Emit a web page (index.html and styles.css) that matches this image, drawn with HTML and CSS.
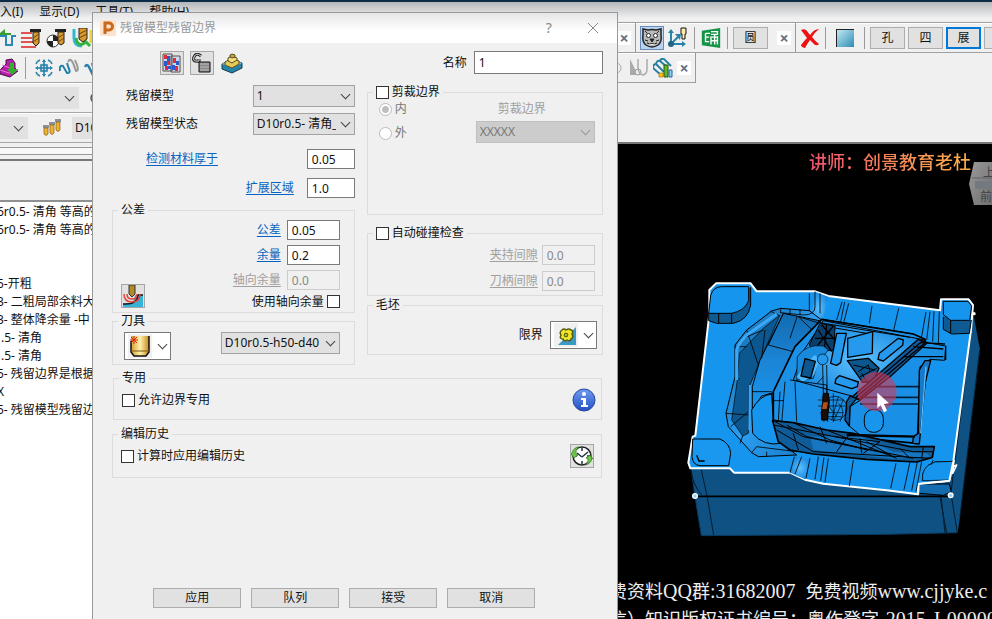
FILE: index.html
```html
<!DOCTYPE html>
<html lang="zh-CN">
<head>
<meta charset="utf-8">
<title>残留模型残留边界</title>
<link rel="stylesheet" href="styles.css">
</head>
<body>
<div class="app">
  <nav class="menubar">
    <a href="#">入(I)</a><a href="#">显示(D)</a><a href="#">工具(T)</a><a href="#">帮助(H)</a>
  </nav>
  <div class="workspace">
    <div class="dock">
      <div class="bar icons-a">
        <svg width="16" height="20" viewBox="0 0 16 20"><path d="M0 6h11" stroke="#3a9c2c" stroke-width="2"/><path d="M0 5l5-4v8z" fill="#3a9c2c"/><path d="M0 8h6v9h6V8h4" fill="none" stroke="#2b87b5" stroke-width="2"/></svg>
        <svg width="20" height="20" viewBox="0 0 20 20"><path d="M0 5h11M0 10h11M0 14h14M0 19h15" stroke="#d8201c" stroke-width="1.6"/><path d="M9 1h11v3H9z" fill="#222"/><path d="M12 4h6v11l-3 3-3-3z" fill="#d99a2b" stroke="#222"/><path d="M12 10l6-4M12 14l6-4" stroke="#6b4413"/></svg>
        <svg width="21" height="20" viewBox="0 0 21 20"><circle cx="7" cy="13" r="6" fill="#fff" stroke="#333"/><path d="M7 13V7a6 6 0 0 1 6 6zM7 13v6a6 6 0 0 1-6-6z" fill="#222"/><path d="M9 1h11v3H9z" fill="#222"/><path d="M12 4h6v11l-3 2-3-2z" fill="#d99a2b" stroke="#222"/><path d="M12 10l6-4M12 14l6-4" stroke="#6b4413"/></svg>
        <svg width="21" height="20" viewBox="0 0 21 20"><path d="M2 1v9q0 8 8 8" fill="none" stroke="#35b5cf" stroke-width="3"/><path d="M4 10q1 8 7 6l3-2 4 4" fill="none" stroke="#35b341" stroke-width="3"/><path d="M19 2v13" stroke="#efd23a" stroke-width="3"/><path d="M7 0h8v11l-4 3-4-3z" fill="#d99a2b" stroke="#222"/><path d="M7 6l8-4M7 10l8-4" stroke="#6b4413"/></svg>
      </div>
      <div class="bar icons-b">
        <svg width="18" height="20" viewBox="0 0 18 20"><path d="M0 12l6-6V2l6-1 3 4v5l3 3-8 6-10-3z" fill="#b321a6" stroke="#4d0a48"/><path d="M2 7l8 3M0 12l9 3 9-3" stroke="#ef72df" fill="none"/><path d="M10 5h4v6h4l-6 6-5-6h3z" fill="#2fb12d"/></svg>
        <i class="sep"></i>
        <svg class="orbit" width="20" height="20" viewBox="0 0 20 20"><circle cx="10" cy="10" r="5" fill="#cfe6f0"/><path d="M10 3v14M3 10h14M2 6q1-3 4-4M14 2q3 1 4 4M2 14q1 3 4 4M14 18q3-1 4-4M7 7h6v6H7z" stroke="#237ea8" stroke-width="1.5" fill="none"/><path d="M10 1l2 3H8zM10 19l2-3H8zM1 10l3-2v4zM19 10l-3-2v4z" fill="#237ea8"/></svg>
        <svg width="20" height="20" viewBox="0 0 20 20"><path d="M1 13q-1-6 3-5l4 7q4 0 2-4L8 5" fill="none" stroke="#2580aa" stroke-width="2"/><path d="M9 4q2-5 5 1l3 8q3 0 1-6l-2-5" fill="none" stroke="#999" stroke-width="2"/></svg>
        <svg width="20" height="20" viewBox="0 0 20 20"><path d="M1 9q2-4 4 0l4 8q4 0 2-4L8 5" fill="none" stroke="#2580aa" stroke-width="2.5"/><path d="M8 2h7v5H8z" fill="#d99a2b"/></svg>
      </div>
      <div class="bar">
        <span class="pick flat level"><select aria-label="层"><option></option></select></span>
        <svg class="lens" width="16" height="16" viewBox="0 0 16 16"><circle cx="8" cy="8" r="5" fill="none" stroke="#555" stroke-width="1.5"/></svg>
      </div>
      <div class="bar">
        <span class="pick flat plane"><select aria-label="平面"><option></option></select></span>
        <svg class="tools" width="20" height="20" viewBox="0 0 20 20"><path d="M1 7h6v3H1zM7 4h6v3H7zM13 1h6v3h-6z" fill="#8b9199"/><path d="M2 10h4v6q-2 3-4 0zM8 7h4v8q-2 3-4 0zM14 4h4v8q-2 3-4 0z" fill="#eeb232" stroke="#8b5d18" stroke-width=".7"/></svg>
        <button class="toolname">D10r0.5</button>
      </div>
      <div class="rules"></div>
      <div class="pane-head"></div>
      <ul class="tree">
        <li>6r0.5- 清角 等高的</li>
        <li>6r0.5- 清角 等高的</li>
        <li></li>
        <li></li>
        <li>5-开粗</li>
        <li>3- 二粗局部余料大</li>
        <li>3- 整体降余量 -中</li>
        <li class="whole">.5- 清角</li>
        <li class="whole">.5- 清角</li>
        <li>5- 残留边界是根据</li>
        <li>X</li>
        <li>5- 残留模型残留边</li>
      </ul>
    </div>

    <div class="main">
      <div class="strip">
        <button class="close" aria-label="关闭工具栏">×</button>
        <i class="edge"></i>
        <button class="ico on" aria-label="助手"><svg width="22" height="22" viewBox="0 0 22 22"><path d="M2 2l5 1q4-1 8 0l5-1v6q1 7-3 10-6 4-12 0-4-3-3-10z" fill="#b9b9b9" stroke="#222" stroke-width="1.5"/><path d="M4 4l2 2M18 4l-2 2M4 13l3 1M18 13l-3 1" stroke="#222"/><circle cx="7.500" cy="8.500" r="2" fill="#fff" stroke="#222"/><circle cx="14.500" cy="8.500" r="2" fill="#fff" stroke="#222"/><path d="M9 12h4l-2 3zM6 16q5 3 10 0" fill="#222" stroke="#222"/><path d="M8 17q3 1 6 0" stroke="#fff"/></svg></button>
        <svg class="axes" width="22" height="22" viewBox="0 0 22 22"><path d="M5 17V4M5 17h13M5 17L13 9" stroke="#2784a8" stroke-width="2"/><path d="M5 2l3 4H2zM20 17l-4-3v6z" fill="#2784a8"/><path d="M9 7l6 0-1 6z" fill="#2784a8"/><circle cx="5" cy="17" r="3" fill="#1d6684"/><path d="M15 1h5v6h-1v5h-3V7h-1z" fill="#ffe9b0" stroke="#111"/></svg>
        <i class="sep"></i>
        <svg class="sheet" width="22" height="24" viewBox="0 0 24 24"><path d="M2 4l20-3v22L2 20z" fill="#149447"/><path d="M6 7h5M6 7v9h4M6 11h4M12 5h7v3h-7M13 11h6M12 15h7M12 10v9M16 8v11M19 10v9" fill="none" stroke="#fff" stroke-width="1.5"/></svg>
        <i class="sep"></i>
        <button class="word">圆</button>
        <button class="close" aria-label="关闭工具栏">×</button>
        <i class="edge"></i>
        <svg class="del" width="20" height="20" viewBox="0 0 20 20"><path d="M1 2q4-2 6 1l3 4q4-6 9-6-5 4-7 8 3 4 7 7-3 3-6-1l-3-3q-3 4-5 8-4-1-4-3 3-4 6-7Q4 6 1 2z" fill="#ee1111"/></svg>
        <i class="sep"></i>
        <span class="swatch"></span>
        <i class="sep"></i>
        <button class="word">孔</button>
        <button class="word">四</button>
        <button class="word active">展</button>
        <button class="word" aria-label="更多"></button>
      </div>
      <div class="strip second">
        <svg class="ring" width="8" height="18" viewBox="0 0 8 18"><circle cx="-1" cy="9" r="5" fill="none" stroke="#aaa"/></svg>
        <svg width="20" height="20" viewBox="0 0 20 20"><path d="M1 1v16h8z" fill="#aaa"/><circle cx="9" cy="14" r="3" fill="#eee" stroke="#999"/><path d="M9 1v8q0 7 5 8 4-1 4-6V1" fill="none" stroke="#aaa" stroke-width="1.5"/></svg>
        <svg width="20" height="20" viewBox="0 0 20 20"><path d="M0 10l9 8M3 6l8 8M7 3l7 6M0 10q0-4 3-4M3 6q1-4 4-3M7 3q1-3 4-2l7 7" fill="none" stroke="#2681a1" stroke-width="2"/><path d="M6 15h4v4H6z" fill="#ffc21a" stroke="#a36a00" stroke-width=".6"/><path d="M11 7h4v12h-4z" fill="#5cb82c" stroke="#275d0b"/><path d="M16 12h3v7h-3z" fill="#8dcdf5" stroke="#246a9b"/></svg>
        <button class="close" aria-label="关闭工具栏">×</button>
      </div>
      <div class="viewport">
        <svg class="scene" viewBox="618 144 374 475" preserveAspectRatio="xMinYMin meet">
          <defs>
            <linearGradient id="wall" x1="0" y1="0" x2="1" y2="1"><stop offset="0" stop-color="#0f62a0"/><stop offset=".5" stop-color="#2b9df0"/><stop offset="1" stop-color="#1376c2"/></linearGradient>
            <linearGradient id="deep" x1="0" y1="0" x2="0" y2="1"><stop offset="0" stop-color="#116bb0"/><stop offset=".5" stop-color="#1c85d6"/><stop offset="1" stop-color="#1695ee"/></linearGradient>
            <radialGradient id="glow"><stop offset="0" stop-color="#5cc0ff"/><stop offset="1" stop-color="#1a8be0"/></radialGradient>
            <linearGradient id="cube" x1="0" y1="0" x2="1" y2="1"><stop offset="0" stop-color="#999"/><stop offset="1" stop-color="#707070"/></linearGradient>
          </defs>
          <g transform="translate(680 270) scale(.33333)" stroke-linejoin="round">
            <path d="M33 592L45 680 64 797 620 793 833 788 840 740 900 240 879 125 820 570z" fill="#0e5182"/>
            <path d="M33 592L45 680 64 797 620 793 833 788" fill="none" stroke="#0a3a60" stroke-width="3"/>
            <path d="M33 600Q40 650 66 675M64 600L82 682 101 795M720 640L780 650 795 788M775 655L800 788M808 640L832 788" fill="none" stroke="#031c30" stroke-width="3"/>
            <path d="M45 679H812" stroke="#000" stroke-width="5"/>
            <path d="M873 190L812 676M899 240L840 740" stroke="#031c30" stroke-width="3"/>
            <path d="M88 60L108 40H212L230 64H405L445 78 780 121 783 88H866L879 105 873 180 820 574 808 632 716 642 714 673 620 661 430 641 375 629 330 608H162L150 595H31L25 578 38 500 46 497 88 132z" fill="#1695ee" stroke="#fff" stroke-width="6"/>
            <path d="M86 128V152L110 160H160Q205 150 212 105V52" fill="#0e5b94" stroke="#000" stroke-width="3"/>
            <path d="M86 130L92 76Q100 50 125 50H206V92Q195 122 155 130z" fill="#1695ee" stroke="#000" stroke-width="3"/>
            <path d="M155 131V160M116 131V160" stroke="#000" stroke-width="3"/>
            <path d="M790 140V178L815 192 868 190 874 150" fill="#0e5b94" stroke="#000" stroke-width="3"/>
            <path d="M790 94H864L875 108 869 151H812L790 134z" fill="#1695ee" stroke="#000" stroke-width="3"/>
            <path d="M812 151V190" fill="none" stroke="#000" stroke-width="3"/>
            <path d="M38 507H120Q150 520 152 550L146 587H60Q38 585 36 560z" fill="#1a97ef" stroke="#000" stroke-width="3"/>
            <path d="M50 556L58 575M56 573H74" stroke="#000" stroke-width="4"/>
            <path d="M728 632Q722 590 765 576L820 574 808 632M716 642H808L814 665 790 676 720 670" fill="#126caf" stroke="#000" stroke-width="3"/>
            <path d="M728 632Q722 590 765 576L820 574 808 630z" fill="#1695ee" stroke="#000" stroke-width="2"/>
            <path d="M820 574L808 632 716 642 714 673" fill="none" stroke="#fff" stroke-width="6"/>
            <path d="M388 130Q405 115 405 65L445 80 430 145 400 165z" fill="url(#glow)"/>
            <path d="M302 115L388 122 425 150 345 200 275 365 280 450 305 520 350 555 235 560 215 548 145 470 138 430 165 320V225L200 180 275 123z" fill="url(#wall)" stroke="#000" stroke-width="3"/>
            <path d="M178 250L250 175 300 135 235 285 208 350 205 490 188 498 155 450 172 330z" fill="#0d5790" stroke="#000" stroke-width="2"/>
            <path d="M310 130L418 152 360 255 290 365 245 378 217 420V350L240 270z" fill="url(#deep)" stroke="#000" stroke-width="3"/>
            <path d="M218 490L215 420Q240 375 275 372L280 450 305 520Q250 530 218 490z" fill="#1695ee" stroke="#000" stroke-width="3"/>
            <path d="M302 115V130M330 118V135M360 118V135M388 122V70M405 65V110Q405 135 370 135L302 128M200 180L235 285M165 230H200M165 320L180 328M138 430L205 435M152 470L205 425M188 498L180 520M255 180L245 265M310 130L265 225 340 245M352 138L330 205M405 188L355 140 420 160M275 365H216M270 123L300 138M188 205L250 180M215 548L230 530 350 545M260 560V545" fill="none" stroke="#000" stroke-width="2.500"/>
            <path d="M170 330V240Q172 225 200 195L290 132" fill="none" stroke="#3aa8f6" stroke-width="9"/>
            <path d="M210 345L208 480" stroke="#3aa8f6" stroke-width="6"/>
            <path d="M343 560L330 608 375 628 390 570z" fill="url(#glow)"/>
            <path d="M343 560L330 608M365 560L345 612M390 565L378 625M420 70V130M486 96L470 150M494 96L482 155M506 100L492 155M576 108L568 160M656 115L640 185M738 126L724 205M750 125L740 210M762 124L758 215M778 124L775 220M415 560L405 628M432 562L422 632M445 565L435 636M520 570L508 648M648 580L632 655M690 575L672 660M712 575L695 662M725 575L708 664M760 570L752 585" fill="none" stroke="#000" stroke-width="2.500"/>
            <path d="M425 148L700 192 735 208 745 270 710 520 500 500 280 450V365L345 230z" fill="#1a90e6" stroke="#000" stroke-width="5"/>
            <path d="M430 152L735 210 540 385 340 330 372 240z" fill="url(#glow)" stroke="#000" stroke-width="3"/>
            <path d="M425 148L565 170 700 192 735 208M420 158L560 181 690 202M430 168L560 190" fill="none" stroke="#000" stroke-width="3"/>
            <path d="M420 160L465 168 462 240 405 245 388 225z" fill="#0b3f6b" stroke="#000" stroke-width="3"/>
            <path d="M440 165L430 270M460 168L410 230M415 180L455 245M405 205H465M425 165L465 210" stroke="#000" stroke-width="4"/>
            <path d="M352 260Q380 220 430 228L445 240 412 280 400 325 350 330z" fill="#1989dc" stroke="#000" stroke-width="2"/>
            <path d="M388 270L405 255 420 270 402 315 368 335 350 320" fill="#4db8fc"/>
            <path d="M375 266L406 274 392 324 363 318z" fill="#0d5790" stroke="#000" stroke-width="4"/>
            <circle cx="428" cy="268" r="16" fill="#2598ec" stroke="#000" stroke-width="2"/>
            <path d="M428 285L432 455M440 285L443 455M330 330L440 345 440 385M300 365L295 455M315 335L305 460M345 335L350 455M278 392H310M412 340L430 320" fill="none" stroke="#000" stroke-width="2.500"/>
            <path d="M470 190H499L482 278 470 286 452 280zM503 205L578 185 577 250 503 262zM594 268L598 250 655 205 670 210 668 226 610 273zM468 326L478 317 535 336 532 350 515 356 465 340z" fill="#2499ed" stroke="#000" stroke-width="4"/>
            <path d="M502 272L565 265 597 295 580 335 548 337z" fill="#0c568e" stroke="#000" stroke-width="4"/>
            <path d="M520 285L585 300M535 305L565 285 570 305M540 320L590 295M560 335L545 310" fill="none" stroke="#000" stroke-width="3"/>
            <path d="M742 218L797 228 794 271 750 268 720 290 712 500 540 495 508 468 510 410 545 388 660 290z" fill="#1a8fe6" stroke="#000" stroke-width="3"/>
            <path d="M715 208L742 218 630 320 540 390 515 382z" fill="#10599a" stroke="#000" stroke-width="4"/>
            <path d="M728 212L525 385M738 216L535 388M510 378L530 385 510 410 508 468 495 450 500 395z" fill="#0f5b98" stroke="#000" stroke-width="4"/>
            <path d="M672 260H790M700 230L790 237M797 228V270M720 218L795 222" stroke="#000" stroke-width="4"/>
            <path d="M575 350H720M550 382H718M540 402H718" stroke="#02223c" stroke-width="5"/>
            <path d="M752 272L735 340 718 522 698 520 700 500 715 490 718 300 735 272z" fill="#1679c9" stroke="#000" stroke-width="4"/>
            <path d="M738 290L722 490" stroke="#58bcfc" stroke-width="4"/>
            <rect x="553" y="418" width="57" height="69" rx="27" fill="#1895ed" stroke="#000" stroke-width="3"/>
            <circle cx="465" cy="415" r="36" fill="none" stroke="#000" stroke-width="2"/>
            <path d="M414 390H492M414 408H495M420 428H490M440 440H485M425 380L470 440M475 380L455 450M490 390L460 455M460 370V455M475 400Q500 420 480 455" fill="none" stroke="#000" stroke-width="2"/>
            <path d="M430 370H445L448 395 442 450H425L424 430 428 395z" fill="#1a0d05" stroke="#000" stroke-width="3"/><path d="M430 397H444L440 417H426z" fill="#b1501c"/>
            <path d="M278 452L340 458 440 480 520 490 690 530 763 530 757 562 710 576 560 568 400 552 330 540 295 515z" fill="#105c98" stroke="#000" stroke-width="5"/>
            <path d="M390 500L540 498 640 545 740 550 752 560 640 566 400 540z" fill="#1776bf"/>
            <path d="M280 465L700 545 760 545M285 455L370 500 620 550M290 480L400 545 750 565M340 458L450 510 560 540M440 480L650 565M540 505L545 550M465 500L600 515 550 550M420 470L440 520M320 465L380 500M560 515L640 560M380 500L700 565M340 490L355 540M730 532L725 565M660 535L690 565M510 490L470 545" fill="none" stroke="#000" stroke-width="3"/>
            <path d="M500 495L705 500" stroke="#000" stroke-width="7"/>
            <circle cx="591" cy="365" r="59" fill="#da3752" fill-opacity=".58"/>
            <path d="M592 368V415L602 406 612 427 621 422 612 402 627 400z" fill="#fff"/>
            <path d="M822 570L818 610 830 585 820 590" fill="none" stroke="#fff" stroke-width="5"/>
            <circle cx="45" cy="678" r="7" fill="#8bd5ff" stroke="#fff" stroke-width="4"/>
            <circle cx="812" cy="676" r="7" fill="#8bd5ff" stroke="#fff" stroke-width="4"/>
            <circle cx="882" cy="131" r="5" fill="#fff"/>
          </g>
          <path d="M974 162H992V205H974L969 184z" fill="url(#cube)"/>
          <path d="M975 181H992V189H975z" fill="#74787f"/>
          <path d="M972 178H992" stroke="#606368"/>
          <text class="face" x="983" y="177">上</text>
          <text class="face" x="980" y="201">前</text>
        </svg>
        <p class="teacher">讲师：创景教育老杜</p>
        <div class="credits">
          <p>费资料<b>QQ</b>群<b>:31682007&nbsp; </b>免费视频<b>www.cjjyke.c</b></p>
          <p>信）知识版权证书编号：粤作登字<b>-2015-J-00000</b></p>
        </div>
      </div>
    </div>
  </div>
</div>

<section class="dialog" role="dialog" aria-labelledby="dlg-title">
  <header class="titlebar">
    <svg width="16" height="16" viewBox="0 0 16 16"><path d="M0 0h16v16H0z" fill="#fbe3cf"/><path d="M5 14V3h4a3 3 0 0 1 0 7H6" fill="none" stroke="#c8691c" stroke-width="3"/></svg>
    <h1 id="dlg-title">残留模型残留边界</h1>
    <button class="plain" aria-label="帮助">?</button>
    <button class="plain" aria-label="关闭"><svg width="12" height="12" viewBox="0 0 12 12"><path d="M1 1l10 10M11 1L1 11" stroke="#888"/></svg></button>
  </header>
  <form class="body">
    <div class="columns">
      <div class="col">
        <div class="iconrow">
          <button type="button" class="tile" aria-label="模型"><svg width="20" height="20" viewBox="0 0 20 20"><path d="M1 1h9v17H1zM9 3h9v16H9z" fill="#c9d9f4" stroke="#5d5146"/><path d="M2 2h3v4H2zM5 8h3v4H5zM3 13h3v4H3zM11 5h3v5h-3zM13 13h3v5h-3z" fill="#e32a35"/><path d="M5 3h3v5H5zM2 8h3v5H2zM6 13h3v3H6zM14 8h3v4h-3zM10 12h3v5h-3z" fill="#285bd0"/></svg></button>
          <button type="button" class="tile" aria-label="解锁"><svg width="20" height="20" viewBox="0 0 20 20"><path d="M9 3Q4-1 2 4t5 4V6" fill="none" stroke="#222" stroke-width="3"/><path d="M9 3Q4-1 2 4t5 4V6" fill="none" stroke="#ddd"/><path d="M7 9h11v10H7z" fill="#888" stroke="#111"/><path d="M8 11h9M8 14h9M8 17h9" stroke="#bbb"/></svg></button>
          <svg width="24" height="24" viewBox="0 0 24 24"><path d="M2 13l10-5 10 4v5l-10 5-10-4z" fill="#2484a8" stroke="#16394a"/><path d="M2 13l10 4 10-5-10-4z" fill="#83cce0"/><path d="M5 11l7-4 7 3v3l-7 4-7-3z" fill="#e7c956" stroke="#554d24"/><path d="M8 7l4-2 5 2v2l-5 3-4-2z" fill="#f5dd77" stroke="#554d24"/><path d="M10 4l2-1 3 1v2l-3 1-2-1z" fill="#c9a73a" stroke="#554d24"/></svg>
        </div>
        <div class="row indent"><label for="rest">残留模型</label><span class="pick wide"><select id="rest"><option>1</option></select></span></div>
        <div class="row indent"><label for="state">残留模型状态</label><span class="pick wide"><select id="state"><option>D10r0.5- 清角_</option></select></span></div>
        <div class="row loose"><a class="detect" href="#">检测材料厚于</a><input class="short" type="text" value="0.05" aria-label="检测材料厚于"></div>
        <div class="row ext"><a href="#">扩展区域</a><input class="short" type="text" value="1.0" aria-label="扩展区域"></div>
        <fieldset class="tol">
          <legend>公差</legend>
          <div class="tolgrid">
            <button type="button" class="tile" aria-label="余量选项"><svg width="22" height="22" viewBox="0 0 22 22"><path d="M1 19q12 1 12-9h8v12H1z" fill="#36b3d9"/><path d="M1 19q14 1 15-9h5" fill="none" stroke="#111" stroke-width="1.5"/><path d="M2 9q0 8 8 8t8-8M5 9q0 5 5 5t5-5" fill="none" stroke="#e3443d" stroke-width="1.500"/><path d="M7 0h6v9l-3 3-3-3z" fill="#b38a2b" stroke="#333"/></svg></button>
            <div class="stack">
              <div class="row"><a href="#">公差</a><input class="num" type="text" value="0.05" aria-label="公差"></div>
              <div class="row"><a href="#">余量</a><input class="num" type="text" value="0.2" aria-label="余量"></div>
              <div class="row off"><a href="#">轴向余量</a><input class="num" type="text" value="0.0" aria-label="轴向余量" disabled></div>
              <div class="row tight"><label for="axial">使用轴向余量</label><input id="axial" type="checkbox"></div>
            </div>
          </div>
        </fieldset>
        <fieldset class="cutter">
          <legend>刀具</legend>
          <div class="row spread">
            <button type="button" class="combo" aria-label="刀具类型"><svg width="24" height="24" viewBox="0 0 24 24"><defs><linearGradient id="gold"><stop offset="0" stop-color="#d69d2c"/><stop offset=".5" stop-color="#fff2ae"/><stop offset="1" stop-color="#c78a1d"/></linearGradient></defs><path d="M0 0h24v24H0z" fill="#f0f0f0"/><path d="M3 2h18v16l-3 4H6l-3-4z" fill="url(#gold)"/><path d="M3 7v11l3 4h12l3-4V2" fill="none" stroke="#111" stroke-width="1.500"/><path d="M3 17h18" stroke="#7b5518"/><path d="M6 2v8M2 6h8M3 3l6 6M9 3L3 9" stroke="#d52a12"/></svg></button>
            <span class="pick tool"><select aria-label="刀具"><option>D10r0.5-h50-d40</option></select></span>
          </div>
        </fieldset>
      </div>
      <div class="col">
        <div class="row name"><label for="nm">名称</label><input id="nm" type="text" value="1"></div>
        <fieldset class="trim">
          <legend><input id="trim" type="checkbox"><label for="trim">剪裁边界</label></legend>
          <div class="trimgrid off">
            <div class="radios">
              <label><input type="radio" name="side" checked disabled>内</label>
              <label><input type="radio" name="side" disabled>外</label>
            </div>
            <div class="limit">
              <label for="bound">剪裁边界</label>
              <span class="pick tool"><select id="bound" disabled><option>XXXXX</option></select></span>
            </div>
          </div>
        </fieldset>
        <fieldset class="clash">
          <legend><input id="clash" type="checkbox"><label for="clash">自动碰撞检查</label></legend>
          <div class="stack off">
            <div class="row"><a href="#">夹持间隙</a><input class="num" type="text" value="0.0" aria-label="夹持间隙" disabled></div>
            <div class="row"><a href="#">刀柄间隙</a><input class="num" type="text" value="0.0" aria-label="刀柄间隙" disabled></div>
          </div>
        </fieldset>
        <fieldset class="block">
          <legend>毛坯</legend>
          <div class="row">
            <span>限界</span>
            <button type="button" class="combo" aria-label="限界"><svg width="24" height="24" viewBox="0 0 24 24"><path d="M0 0h24v24H0z" fill="#f0f0f0"/><path d="M22 4v18H4z" fill="#3a9ac4"/><path d="M8 7q2-2 4 0 3-2 5 0 3 1 1 4 2 3-1 5-1 3-4 1-3 2-4-1-4 0-2-4-2-3 1-5z" fill="#efe62b" stroke="#575c0e" stroke-width="1.500"/><path d="M11 10l3 1-1 3-3-1z" fill="#b8be18" stroke="#575c0e"/></svg></button>
          </div>
        </fieldset>
      </div>
    </div>
    <fieldset class="private">
      <legend>专用</legend>
      <div class="check"><input id="priv" type="checkbox"><label for="priv">允许边界专用</label>
      <svg class="info" width="24" height="24" viewBox="0 0 24 24"><defs><linearGradient id="ball" x2="0" y2="1"><stop offset="0" stop-color="#6f9cf0"/><stop offset="1" stop-color="#2450c4"/></linearGradient></defs><circle cx="12" cy="12" r="11" fill="url(#ball)" stroke="#27459e"/><circle cx="12" cy="6" r="2" fill="#fff"/><path d="M9 10h5v7h2v2H9v-2h2v-5H9z" fill="#fff"/></svg></div>
    </fieldset>
    <fieldset class="history">
      <legend>编辑历史</legend>
      <div class="check"><input id="hist" type="checkbox"><label for="hist">计算时应用编辑历史</label>
      <button type="button" class="tile clock" aria-label="编辑历史"><svg width="22" height="22" viewBox="0 0 22 22"><circle cx="11" cy="11" r="9" fill="#fff" stroke="#222" stroke-width="1.500"/><path d="M11 3v3M11 16v3M3 11h3M16 11h3M11 12L6 8M11 12l6-5" stroke="#234" stroke-width="1.500"/><path d="M1 8q2-6 7-6Q4 5 5 9l2 1-4 3-3-4zM21 13q-1 6-7 7 4-3 3-6l-2-1 4-3 3 4z" fill="#6bc64b" stroke="#2b6b1b" stroke-width=".7"/></svg></button></div>
    </fieldset>
    <footer class="actions">
      <button type="button">应用</button><button type="button">队列</button><button type="button">接受</button><button type="button">取消</button>
    </footer>
  </form>
</section>
</body>
</html>
```

FILE: styles.css
```css
* { box-sizing: border-box; }
html, body { height: 100%; margin: 0; overflow: hidden; }
body, button, input, select {
  font-family: "Noto Sans", "Noto Sans CJK SC", sans-serif;
  font-size: 12px;
  line-height: 16px;
  color: #111;
}
body { background: #f0f0f0; position: relative; }
p, h1, ul { margin: 0; padding: 0; font-weight: normal; }
button, input, select { margin: 0; border-radius: 0; }
svg { display: block; flex: none; }

/* application frame */
.app { display: flex; flex-direction: column; height: 100%; }
.menubar {
  display: flex;
  gap: 16px;
  height: 23px;
  padding-top: 2px;
  border-top: 2px solid #0a2c47;
  border-bottom: 1px solid #a0a0a0;
  background: linear-gradient(#b4b8ba, #f0f0f0 80%);
}
.menubar a { color: #111; text-decoration: none; white-space: nowrap; }
.workspace { flex: 1; display: grid; grid-template-columns: 617px minmax(0, 1fr); min-height: 0; }
.dock { display: flex; flex-direction: column; min-height: 0; border-right: 1px solid #555; }
.bar {
  display: flex;
  align-items: center;
  flex: none;
  height: 30px;
  border-bottom: 1px solid #a8a8a8;
  box-shadow: inset 0 1px #fff;
}
.icons-a, .icons-b { gap: 5px; }
.sep { flex: none; width: 1px; height: 22px; margin: 0 5px; background: #9a9a9a; }
.icons-b .sep { margin: 0 3px 0 2px; }
.pick { position: relative; display: inline-flex; flex: none; height: 22px; }
.pick select {
  appearance: none;
  width: 100%;
  height: 100%;
  padding: 0 18px 0 3px;
  border: 1px solid #a3a3a3;
  background: #e1e1e1;
  opacity: 1;
}
.pick::after, .combo::after {
  content: "";
  width: 6px;
  height: 6px;
  border: solid #444;
  border-width: 0 1px 1px 0;
  transform: rotate(45deg);
}
.pick::after { position: absolute; right: 6px; top: 6px; pointer-events: none; }
.flat select { border-color: #e1e1e1; }
.level { width: 79px; }
.lens { margin-left: 9px; }
.plane { width: 28px; }
.tools { margin: 0 10px 0 14px; }
.toolname { width: 90px; height: 22px; padding: 0 3px; border: 0; background: #e1e1e1; text-align: left; }
.rules { flex: none; height: 18px; border-bottom: 2px solid #777; background: linear-gradient(#f0f0f0 4px, #999 4px 5px, #f8f8f8 5px 11px, #999 11px 12px, #f0f0f0 12px); }
.pane-head { flex: none; height: 41px; border-bottom: 2px solid #909090; }
.tree { flex: 1; list-style: none; padding-top: 1px; background: #fff; overflow: hidden; }
.tree li { height: 18px; line-height: 18px; text-indent: -3px; white-space: nowrap; }
.tree .whole { text-indent: 1px; }

.main { display: flex; flex-direction: column; min-width: 0; }
.strip { display: flex; align-items: center; flex: none; height: 30px; overflow: hidden; border-bottom: 1px solid #a0a0a0; box-shadow: inset 0 1px #fff; }
.edge { flex: none; align-self: stretch; width: 1px; margin: 0 4px; background: #999; }
.close { flex: none; width: 14px; height: 14px; padding: 0; border: 0; background: #fff; color: #66717e; font-size: 16px; font-weight: bold; line-height: 12px; }
.ico { flex: none; width: 24px; height: 24px; padding: 0; border: 1px solid #6a8cb8; background: #b9d2f0; }
.axes { margin: 0 1px 0 2px; }
.word { flex: none; width: 35px; height: 22px; padding: 0; border: 1px solid #adadad; background: #e1e1e1; }
.word + .word { margin-left: 3px; }
.word + .close { margin-left: 9px; }
.word.active { border: 2px solid #0078d7; }
.swatch { flex: none; width: 18px; height: 18px; border: solid #222; border-width: 1px 0 0 1px; background: linear-gradient(135deg, #c3e8f4, #2e8cb4); margin: 0 5px; }
.second { align-self: flex-start; gap: 4px; padding-right: 4px; border-right: 1px solid #999; }
.viewport { position: relative; flex: 1; min-height: 0; margin-top: 59px; border-top: 2px solid #777; background: #000; overflow: hidden; }
.scene { position: absolute; inset: 0 0 auto 1px; width: calc(100% - 1px); }
.face { font: 12px "Noto Sans CJK SC", sans-serif; fill: #444; }
.teacher {
  position: absolute;
  top: 4px;
  right: 21px;
  font: 500 18px/26px "Noto Sans CJK SC", sans-serif;
  background: linear-gradient(90deg, #f0506e, #f58458 50%, #ffb14a);
  background-clip: text;
  color: transparent;
}
.credits { position: absolute; left: -8px; top: 434px; font: 18px/27px "Liberation Serif", "Noto Sans CJK SC", serif; color: #eee; white-space: nowrap; }
.credits b { font-size: 20px; font-weight: normal; }

/* boundary dialog */
.dialog {
  position: absolute;
  top: 12px;
  bottom: 0;
  left: 92px;
  width: 53%;
  display: flex;
  flex-direction: column;
  border: 1px solid #999;
  border-bottom: 0;
  background: #f0f0f0;
}
.titlebar { display: flex; align-items: center; flex: none; height: 30px; padding: 0 16px 0 7px; background: linear-gradient(#e6e6e6, #fff 60%); }
.titlebar h1 { flex: 1; margin-left: 4px; font-size: 12px; color: #999; }
.plain { width: 14px; height: 20px; padding: 0; border: 0; background: none; color: #888; font-size: 14px; }
.plain + .plain { margin-left: 31px; }
.body { flex: 1; display: flex; flex-direction: column; padding: 8px 14px 11px 19px; }
.columns { display: grid; grid-template-columns: 243fr 236fr; gap: 12px; }
.col { display: flex; flex-direction: column; min-width: 0; }
.iconrow { display: flex; gap: 6px; margin: 0 0 10px 48px; }
.tile { flex: none; display: grid; place-items: center; width: 24px; height: 24px; padding: 0; border: 1px solid #a6a6a6; background: #e1e1e1; }
.row { display: flex; align-items: center; justify-content: flex-end; }
a { color: #0563c1; text-underline-offset: 2px; }
.indent { justify-content: space-between; padding-left: 14px; margin-bottom: 6px; }
.wide { width: 102px; }
.loose { justify-content: space-between; padding-left: 34px; margin: 8px 0 9px; }
.ext { gap: 13px; margin-bottom: 4px; }
input[type="text"] { height: 20px; padding: 0 4px; border: 1px solid #7a7a7a; background: #fff; }
.short { width: 48px; }
.num { width: 53px; }
fieldset { min-width: 0; margin: 0; padding: 0; border: 1px solid #dcdcdc; }
legend { display: flex; align-items: center; gap: 3px; height: 16px; margin-left: 5px; padding: 0 3px; }
input[type="checkbox"] { appearance: none; flex: none; width: 13px; height: 13px; border: 1px solid #333; background: #fff; }
.stack { display: flex; flex-direction: column; gap: 5px; }
.stack .row { gap: 6px; }
.tolgrid { display: flex; align-items: flex-end; justify-content: space-between; padding: 2px 14px 4px 8px; }
.stack .tight { gap: 3px; height: 13px; }
.off, .off a, .off label, .off select { color: #a0a0a0; }
.off input[type="text"] { border: 1px solid #ccc; background: #f0f0f0; color: #888; }
.cutter { height: 52px; }
.spread { align-items: flex-start; justify-content: space-between; padding: 3px 14px 0 11px; }
.combo { display: flex; align-items: center; gap: 7px; width: 47px; height: 28px; padding: 0 3px; border: 1px solid #7a7a7a; background: #fff; }
.combo::after { margin-top: -4px; }
.tool { width: 119px; }
.name { gap: 7px; height: 23px; margin-bottom: 10px; }
.name input { width: 129px; height: 23px; }
.trim { height: 131px; margin-bottom: 10px; }
.trimgrid { display: flex; justify-content: space-between; padding: 1px 7px 0 11px; }
.radios { display: flex; flex-direction: column; gap: 8px; }
.radios label { display: flex; align-items: center; gap: 3px; color: #777; }
input[type="radio"] { appearance: none; width: 13px; height: 13px; margin: 0; border: 1px solid #bbb; border-radius: 50%; background: #fff; }
input[type="radio"]:checked { background: radial-gradient(#bfbfbf 0 3px, #fff 4px); }
.limit { display: flex; flex-direction: column; gap: 4px; }
.limit label { padding-left: 22px; }
.limit select { background: #ccc; border-color: #bfbfbf; color: #777; }
.limit .pick::after { border-color: #999; }
.clash { height: 71px; margin-bottom: 1px; }
.clash .stack { gap: 6px; padding: 4px 7px 0; }
.clash .row { gap: 4px; }
.block { height: 58px; }
.block .row { gap: 7px; padding: 8px 5px 0; }
.private { height: 50px; margin: 5px 1px 6px; }
.history { height: 52px; margin-right: 1px; }
.check { display: flex; align-items: center; gap: 3px; height: 28px; padding: 0 5px 0 8px; }
.check > :last-child { margin-left: auto; }
.history .check { padding-right: 7px; }
.actions { display: flex; justify-content: center; gap: 10px; margin-top: auto; padding-right: 26px; }
.actions button { width: 88px; height: 20px; padding: 0; border: 1px solid #adadad; background: #e1e1e1; line-height: 18px; }
```
